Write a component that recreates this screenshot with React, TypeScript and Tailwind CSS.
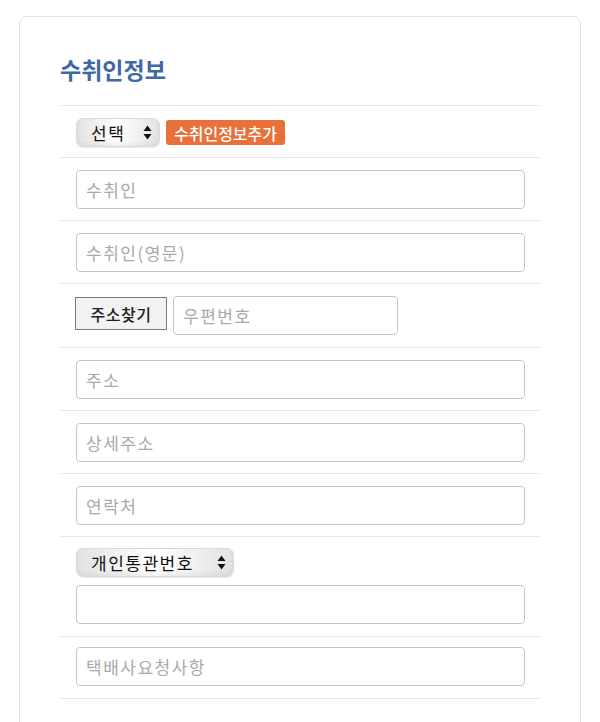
import React from "react";

const font = { fontFamily: '"Noto Sans CJK KR", "Noto Sans", sans-serif' };

function Arrows() {
  return (
    <svg width="9" height="15" viewBox="0 0 9 15" className="shrink-0">
      <path d="M4.5 0.5 L8.5 6 L0.5 6 Z" fill="#111" />
      <path d="M4.5 14.5 L8.5 9 L0.5 9 Z" fill="#111" />
    </svg>
  );
}

function FakeSelect({ label, w }: { label: string; w: string }) {
  return (
    <div
      className={`${w} h-[29px] flex items-center justify-between pl-[14px] pr-[7px] rounded-[7px] border border-[#dadada] bg-gradient-to-r from-[#e2e2e2] via-white to-[#e2e2e2] shadow-[inset_0_-3px_4px_rgba(0,0,0,0.05),0_1px_1px_rgba(0,0,0,0.08)] text-[17px] text-[#111] tracking-[1.5px]`}
    >
      <span className="leading-none">{label}</span>
      <Arrows />
    </div>
  );
}

function Field({ ph, w = "w-[449px]" }: { ph?: string; w?: string }) {
  return (
    <div
      className={`${w} h-[39px] border-[1.5px] border-[#c3c6ca] rounded-[4px] bg-white flex items-center pl-[9px] text-[17px] text-[#a9a9a9] tracking-[1.5px]`}
    >
      {ph}
    </div>
  );
}

export default function App() {
  return (
    <div className="min-h-[722px] bg-white pt-4 px-[19px] overflow-hidden" style={font}>
      <div className="border border-[#e2e2e2] rounded-[8px] px-10 h-[760px] bg-white">
        <h1 className="pt-[37px] mb-[20px] text-[23px] leading-[31px] font-bold text-[#3f68a6]">
          수취인정보
        </h1>
        <div className="border-b border-[#e8e8e8]">
          <div className="border-t border-[#e8e8e8] px-4 pt-[12px] pb-[10px] flex items-center gap-[6px]">
            <FakeSelect label="선택" w="w-[84px]" />
            <div className="w-[119px] h-[25px] flex items-center justify-center rounded-[3px] bg-[#e8703a] text-white text-[16px] font-medium">
              수취인정보추가
            </div>
          </div>
          <div className="border-t border-[#e8e8e8] px-4 pt-3 pb-[11px]">
            <Field ph="수취인" />
          </div>
          <div className="border-t border-[#e8e8e8] px-4 pt-3 pb-[11px]">
            <Field ph="수취인(영문)" />
          </div>
          <div className="border-t border-[#e8e8e8] pl-[15px] pr-4 pt-3 pb-[12px] flex items-start gap-[6px]">
            <div className="mt-px w-[92px] h-[33px] border border-[#7a7a7a] bg-[#f2f2f2] flex items-center justify-center text-[16px] font-medium text-[#222] tracking-[0.5px]">
              주소찾기
            </div>
            <Field ph="우편번호" w="w-[225px]" />
          </div>
          <div className="border-t border-[#e8e8e8] px-4 pt-3 pb-[11px]">
            <Field ph="주소" />
          </div>
          <div className="border-t border-[#e8e8e8] px-4 pt-3 pb-[11px]">
            <Field ph="상세주소" />
          </div>
          <div className="border-t border-[#e8e8e8] px-4 pt-3 pb-[11px]">
            <Field ph="연락처" />
          </div>
          <div className="border-t border-[#e8e8e8] px-4 pt-[11px] pb-[12px] flex flex-col gap-2">
            <FakeSelect label="개인통관번호" w="w-[158px]" />
            <Field />
          </div>
          <div className="border-t border-[#e8e8e8] px-4 pt-[10px] pb-[12px]">
            <Field ph="택배사요청사항" />
          </div>
        </div>
      </div>
    </div>
  );
}
